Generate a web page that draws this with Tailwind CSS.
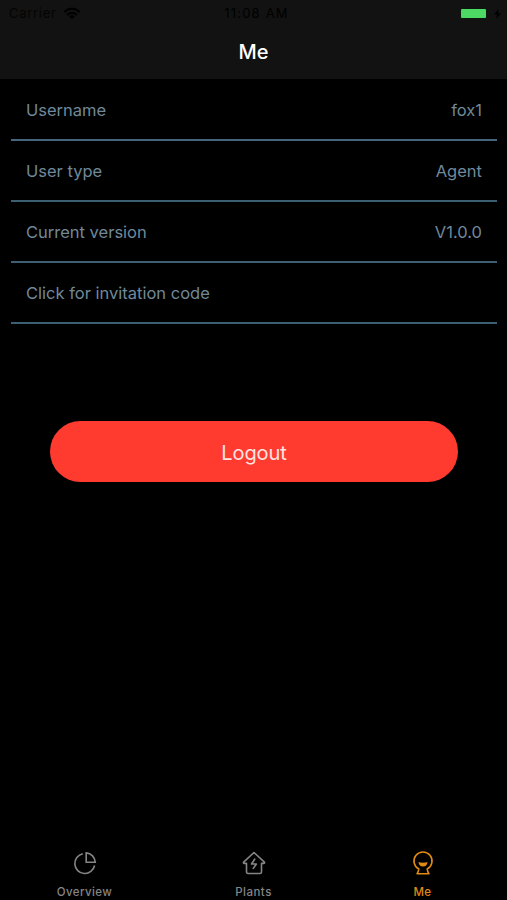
<!DOCTYPE html>
<html lang="en">
<head>
<meta charset="utf-8">
<title>Me</title>
<script src="https://cdn.jsdelivr.net/npm/@tailwindcss/browser@4"></script>
</head>
<body class="bg-black font-['Inter','Liberation_Sans',sans-serif]">
<div class="flex h-[900px] w-[507px] flex-col overflow-hidden bg-black">
  <header class="h-[79px] shrink-0 bg-[#121212]">
    <div class="grid h-[27px] grid-cols-3 items-center pl-[9px] pr-[6px] text-[13px] text-black">
      <div class="flex items-center gap-[6px]">
        <span class="tracking-[0.7px] text-black/80">Carrier</span>
        <svg class="h-[13px] w-[18px]" viewBox="0 0 18 13" fill="none" stroke="black" stroke-width="2.2"><path d="M1 5Q9-1.8 17 5M4 8Q9 3.8 14 8"/><path d="M9 12L6.2 9.4Q9 7.2 11.8 9.4Z" fill="black" stroke="none"/></svg>
      </div>
      <span class="whitespace-nowrap pl-[3px] text-center tracking-[1.2px] text-black">11:08 AM</span>
      <div class="flex items-center justify-end gap-[7px]">
        <div class="h-[11px] w-[27px] rounded-[2px] border border-[#0b160d] bg-[#4cd964]"></div>
        <svg class="h-[10px] w-[7px]" viewBox="0 0 7 10"><path d="M4.5 0L0 5.6h3L2.3 10 7 4.3H4Z" fill="black"/></svg>
      </div>
    </div>
    <h1 class="pt-[10px] text-center text-[20px] leading-[31px] font-medium text-white">Me</h1>
  </header>
  <main class="flex flex-1 flex-col pt-px">
    <div class="mr-[10px] ml-[11px] text-[16.5px] text-[#70899a]">
      <div class="flex h-[61px] items-center justify-between border-b-2 border-[#45667d] px-[15px] pt-[2px]"><span>Username</span><span>fox1</span></div>
      <div class="flex h-[61px] items-center justify-between border-b-2 border-[#3d5f74] px-[15px] pt-[2px]"><span>User type</span><span>Agent</span></div>
      <div class="flex h-[61px] items-center justify-between border-b-2 border-[#3d5f74] px-[15px] pt-[2px]"><span>Current version</span><span>V1.0.0</span></div>
      <div class="flex h-[61px] items-center justify-between border-b-2 border-[#3d5f74] px-[15px] pt-[2px]"><span>Click for invitation code</span></div>
    </div>
    <button class="mt-[97px] mr-[49px] ml-[50px] h-[61px] rounded-full bg-[#ff3b30] pt-[2px] text-[20px] tracking-[-0.1px] text-[#ffe4e1]">Logout</button>
  </main>
  <nav class="grid h-[52px] grid-cols-3 text-[11.5px] font-medium text-[#858585]">
    <a class="flex flex-col items-center gap-[10px] pt-[3px]">
      <svg class="h-6 w-6" viewBox="0 0 24 24" fill="none" stroke="currentColor" stroke-width="1.6"><path d="M9.8 2.7A10 10 0 1 0 21.6 14.5"/><path d="M13.2 1.9V11.2H22.3A9.8 9.8 0 0 0 13.2 1.9Z"/></svg>
      <span class="leading-[14px] tracking-[0.4px]">Overview</span>
    </a>
    <a class="flex flex-col items-center gap-[10px] pt-[3px]">
      <svg class="h-6 w-6" viewBox="0 0 24 24" fill="none" stroke="currentColor" stroke-width="1.6" stroke-linejoin="round" stroke-linecap="round"><path d="M12 1.5L1.6 11.2Q1.1 12.3 2.3 12.4H4.5V21Q4.5 22.5 6 22.5H18Q19.5 22.5 19.5 21V12.4H21.7Q22.9 12.3 22.4 11.2Z"/><path d="M12.7 8.2L9.5 13H14.4L11.2 17.4"/></svg>
      <span class="leading-[14px] tracking-[0.5px]">Plants</span>
    </a>
    <a class="flex flex-col items-center gap-[10px] pt-[3px] text-[#e08a12]">
      <svg class="h-6 w-6" viewBox="0 0 24 24" fill="none" stroke="currentColor" stroke-width="1.6" stroke-linejoin="round"><path d="M7.8 18A9 9 0 1 1 16.2 18Q16.4 20.3 17.9 22.7H6.1Q7.6 20.3 7.8 18Z"/><path d="M7.5 10.9Q9.2 11.7 12 11.7T16.5 10.9Q16 15.4 12 15.4T7.5 10.9Z" fill="currentColor" stroke="none"/></svg>
      <span class="leading-[14px] tracking-[0.3px]">Me</span>
    </a>
  </nav>
</div>
</body>
</html>
